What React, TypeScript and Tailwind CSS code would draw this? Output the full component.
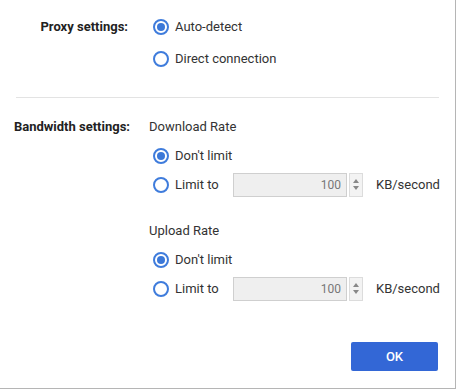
import React from "react";

function Radio({ checked }: { checked: boolean }) {
  return (
    <span className="relative inline-flex h-[16px] w-[16px] shrink-0 items-center justify-center rounded-full border-2 border-[#3f7cdc] bg-white">
      {checked && <span className="h-[8px] w-[8px] rounded-full bg-[#3b78d8]" />}
    </span>
  );
}

function RadioRow({ checked, label, h = "h-[29px]" }: { checked: boolean; label: string; h?: string }) {
  return (
    <div className={`flex ${h} items-center pl-[4px]`}>
      <Radio checked={checked} />
      <span className="ml-[6px] text-[13px] text-[#333]">{label}</span>
    </div>
  );
}

function LimitRow() {
  return (
    <div className="flex h-[29px] items-center pl-[4px]">
      <Radio checked={false} />
      <span className="ml-[6px] w-[58px] text-[13px] text-[#333]">Limit to</span>
      <div className="flex h-[24px] w-[114px] items-center justify-end border border-[#cfcfcf] bg-[#efefef] pr-[5px] text-[12px] text-[#777]">
        100
      </div>
      <div className="ml-[2px] flex h-[24px] w-[14px] flex-col items-center justify-center gap-[3px] border border-[#dcdcdc] bg-[#f3f3f3]">
        <svg width="6" height="4" viewBox="0 0 6 4"><path d="M0 4 L3 0 L6 4 Z" fill="#888" /></svg>
        <svg width="6" height="4" viewBox="0 0 6 4"><path d="M0 0 L3 4 L6 0 Z" fill="#888" /></svg>
      </div>
      <span className="ml-[13px] text-[13px] text-[#333]">KB/second</span>
    </div>
  );
}

export default function App() {
  return (
    <div className="h-[392px] w-[460px] bg-white" style={{ fontFamily: "Roboto, 'Liberation Sans', sans-serif" }}>
      <div className="relative h-[389px] w-[456px] border-b border-r border-[#b5b5b5] bg-white">
        <div className="pt-[11px]">
          <div className="flex">
            <div className="flex h-[32px] w-[130px] items-center justify-end pr-[2px] text-[13px] font-bold text-[#222]">
              Proxy settings:
            </div>
            <div className="ml-[19px] flex flex-col">
              <RadioRow checked label="Auto-detect" h="h-[32px]" />
              <RadioRow checked={false} label="Direct connection" h="h-[32px]" />
            </div>
          </div>
          <div className="mx-[16px] mt-[22px] h-px w-[423px] bg-[#e3e3e3]" />
          <div className="mt-[14px] flex">
            <div className="flex h-[29px] w-[130px] items-center justify-end text-[13px] font-bold text-[#222]">
              Bandwidth settings:
            </div>
            <div className="ml-[19px] flex flex-col">
              <div className="flex h-[29px] items-center text-[13px] text-[#333]">Download Rate</div>
              <RadioRow checked label="Don't limit" />
              <LimitRow />
              <div className="mt-[17px] flex h-[29px] items-center text-[13px] text-[#333]">Upload Rate</div>
              <RadioRow checked label="Don't limit" />
              <LimitRow />
            </div>
          </div>
          <div className="mt-[39px] flex justify-end pr-[17px]">
            <button className="flex h-[29px] w-[87px] items-center justify-center rounded-[2px] bg-[#3367d6] text-[13px] font-medium text-white">
              OK
            </button>
          </div>
        </div>
      </div>
    </div>
  );
}
